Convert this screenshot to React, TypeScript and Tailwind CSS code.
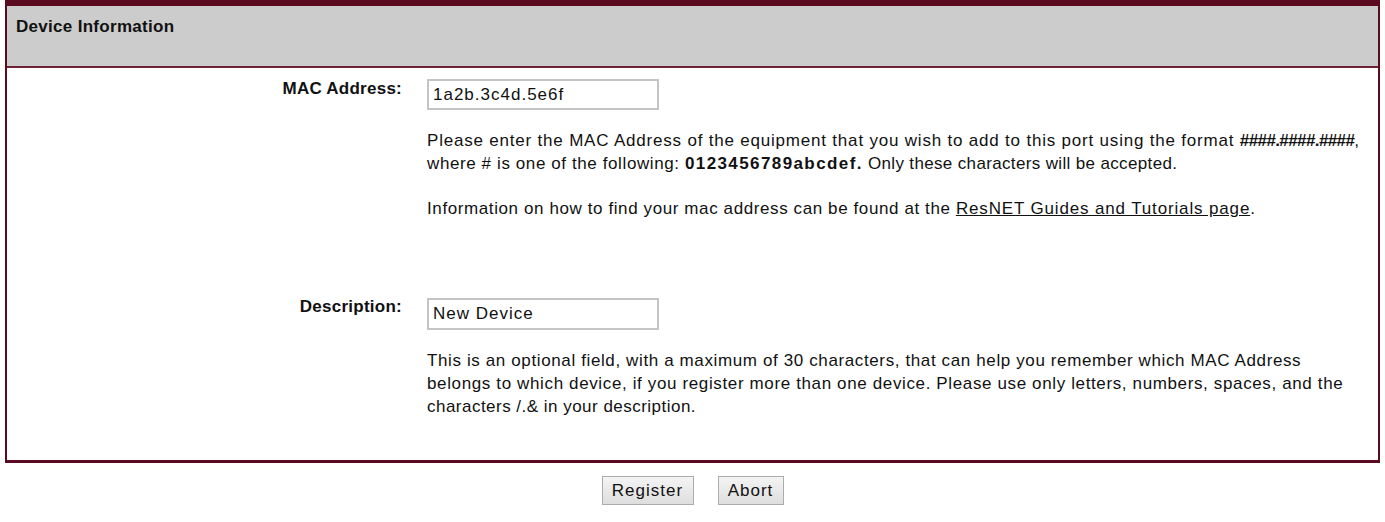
import React from "react";

export default function App() {
  return (
    <div className="min-h-screen bg-white px-[5px] font-['Liberation_Sans',Arial,sans-serif] text-[17px] leading-[23px] text-[#111]">
      <div className="border-x-[2px] border-t-[6px] border-b-[3px] border-[#5a0b1f]">
        <div className="h-[62px] border-b-2 border-[#6e2236] bg-[#cccccc] pl-[9px] pt-[9px] font-bold tracking-[0.3px]">
          Device Information
        </div>

        <div className="flex pt-[9px]">
          <div className="w-[395px] shrink-0 text-right font-bold tracking-[0.25px]">MAC Address:</div>
          <div className="pl-[25px] pr-[10px]">
            <input
              defaultValue="1a2b.3c4d.5e6f"
              className="mt-[2px] h-[31px] w-[232px] border-2 border-[#c4c4c4] bg-white px-[4px] text-[17px] tracking-[1px] text-[#111] outline-none"
            />
            <p className="mt-[19px] whitespace-nowrap">
              <span className="tracking-[0.8px]">
                Please enter the MAC Address of the equipment that you wish to add to this port using the
                format{" "}
              </span>
              <b className="tracking-[-0.6px]">####.####.####</b>,
              <br />
              <span className="tracking-[0.6px]">where # is one of the following: </span>
              <b className="tracking-[1.4px]">0123456789abcdef.</b>
              <span className="tracking-[0.35px]"> Only these characters will be accepted.</span>
            </p>
            <p className="mt-[22px] whitespace-nowrap tracking-[0.6px]">
              Information on how to find your mac address can be found at the{" "}
              <a href="#" className="underline tracking-[0.85px]">
                ResNET Guides and Tutorials page
              </a>
              .
            </p>
          </div>
        </div>

        <div className="flex pt-[75px] pb-[42px]">
          <div className="w-[395px] shrink-0 text-right font-bold tracking-[0.25px]">Description:</div>
          <div className="pl-[25px] pr-[10px]">
            <input
              defaultValue="New Device"
              className="mt-[3px] h-[32px] w-[232px] border-2 border-[#c4c4c4] bg-white px-[4px] text-[17px] tracking-[1px] text-[#111] outline-none"
            />
            <p className="mt-[19px] whitespace-nowrap">
              <span className="tracking-[0.62px]">
                This is an optional field, with a maximum of 30 characters, that can help you remember which
                MAC Address
              </span>
              <br />
              <span className="tracking-[0.63px]">
                belongs to which device, if you register more than one device. Please use only letters,
                numbers, spaces, and the
              </span>
              <br />
              <span className="tracking-[0.48px]">characters /.&amp; in your description.</span>
            </p>
          </div>
        </div>
      </div>

      <div className="mt-[13px] flex justify-center gap-[24px]">
        <button className="h-[29px] w-[92px] border border-[#acacac] bg-gradient-to-b from-[#f4f4f4] to-[#dedede] text-[17px] tracking-[1px] text-[#111]">
          Register
        </button>
        <button className="h-[29px] w-[66px] border border-[#acacac] bg-gradient-to-b from-[#f4f4f4] to-[#dedede] text-[17px] tracking-[1px] text-[#111]">
          Abort
        </button>
      </div>
    </div>
  );
}
